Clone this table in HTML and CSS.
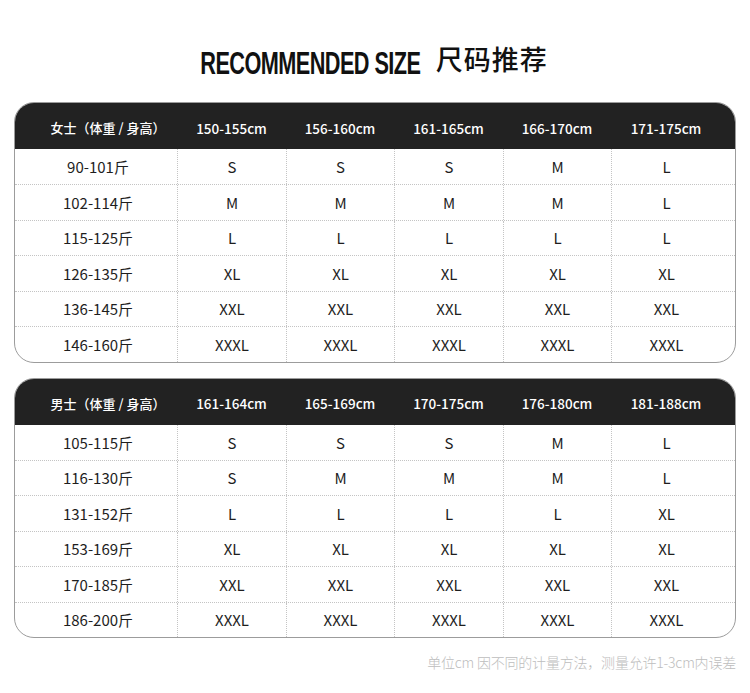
FILE: index.html
```html
<!DOCTYPE html>
<html lang="zh">
<head>
<meta charset="utf-8">
<title>尺码推荐</title>
<link rel="stylesheet" href="styles.css">
</head>
<body>
<div class="page">
  <h1 class="title"><span class="en">RECOMMENDED SIZE</span><span class="cn">尺码推荐</span></h1>

  <div class="chart">
    <div class="row head">
      <div class="c">女士（体重 / 身高）</div>
      <div class="c">150-155cm</div>
      <div class="c">156-160cm</div>
      <div class="c">161-165cm</div>
      <div class="c">166-170cm</div>
      <div class="c">171-175cm</div>
    </div>
    <div class="row"><div class="c">90-101斤</div><div class="c">S</div><div class="c">S</div><div class="c">S</div><div class="c">M</div><div class="c">L</div></div>
    <div class="row"><div class="c">102-114斤</div><div class="c">M</div><div class="c">M</div><div class="c">M</div><div class="c">M</div><div class="c">L</div></div>
    <div class="row"><div class="c">115-125斤</div><div class="c">L</div><div class="c">L</div><div class="c">L</div><div class="c">L</div><div class="c">L</div></div>
    <div class="row"><div class="c">126-135斤</div><div class="c">XL</div><div class="c">XL</div><div class="c">XL</div><div class="c">XL</div><div class="c">XL</div></div>
    <div class="row"><div class="c">136-145斤</div><div class="c">XXL</div><div class="c">XXL</div><div class="c">XXL</div><div class="c">XXL</div><div class="c">XXL</div></div>
    <div class="row"><div class="c">146-160斤</div><div class="c">XXXL</div><div class="c">XXXL</div><div class="c">XXXL</div><div class="c">XXXL</div><div class="c">XXXL</div></div>
  </div>

  <div class="chart second">
    <div class="row head">
      <div class="c">男士（体重 / 身高）</div>
      <div class="c">161-164cm</div>
      <div class="c">165-169cm</div>
      <div class="c">170-175cm</div>
      <div class="c">176-180cm</div>
      <div class="c">181-188cm</div>
    </div>
    <div class="row"><div class="c">105-115斤</div><div class="c">S</div><div class="c">S</div><div class="c">S</div><div class="c">M</div><div class="c">L</div></div>
    <div class="row"><div class="c">116-130斤</div><div class="c">S</div><div class="c">M</div><div class="c">M</div><div class="c">M</div><div class="c">L</div></div>
    <div class="row"><div class="c">131-152斤</div><div class="c">L</div><div class="c">L</div><div class="c">L</div><div class="c">L</div><div class="c">XL</div></div>
    <div class="row"><div class="c">153-169斤</div><div class="c">XL</div><div class="c">XL</div><div class="c">XL</div><div class="c">XL</div><div class="c">XL</div></div>
    <div class="row"><div class="c">170-185斤</div><div class="c">XXL</div><div class="c">XXL</div><div class="c">XXL</div><div class="c">XXL</div><div class="c">XXL</div></div>
    <div class="row"><div class="c">186-200斤</div><div class="c">XXXL</div><div class="c">XXXL</div><div class="c">XXXL</div><div class="c">XXXL</div><div class="c">XXXL</div></div>
  </div>

  <p class="note">单位cm 因不同的计量方法，测量允许1-3cm内误差</p>
</div>
</body>
</html>
```

FILE: styles.css
```css
html, body {
  margin: 0;
  padding: 0;
  background: #ffffff;
}

.page {
  width: 750px;
  height: 693px;
  font-family: "Noto Sans CJK SC", "Noto Sans", sans-serif;
  color: #1e1e1e;
  overflow: hidden;
}

.title {
  margin: 0;
  padding-top: 47px;
  height: 102px;
  box-sizing: border-box;
  display: flex;
  justify-content: center;
  align-items: flex-start;
  font-weight: normal;
  line-height: 1;
}

.title .en {
  display: inline-block;
  font-family: "Liberation Sans", "Noto Sans", sans-serif;
  font-weight: bold;
  font-size: 31px;
  letter-spacing: -0.8px;
  color: #111;
  transform: scaleX(0.70);
  transform-origin: right center;
  margin-left: -96px;
  margin-top: 1px;
}

.title .cn {
  font-family: "Noto Sans CJK SC", sans-serif;
  font-size: 27px;
  font-weight: 500;
  color: #111;
  margin-left: 15px;
  letter-spacing: 1px;
  margin-top: -2px;
}

.chart {
  margin-left: 14px;
  width: 720px;
  border: 1px solid #9c9c9c;
  border-radius: 20px;
  overflow: hidden;
}

.chart.second {
  margin-top: 15px;
}

.row {
  display: grid;
  grid-template-columns: 162px 109px 108px 109px 108px 124px;
  height: 35.5px;
  border-top: 1px dotted #c4c4c4;
  box-sizing: border-box;
}

.row .c {
  display: flex;
  align-items: center;
  justify-content: center;
  font-size: 15px;
  border-left: 1px dotted #c4c4c4;
}

.row .c:first-child {
  border-left: none;
  padding-left: 4px;
}

.row .c:last-child {
  padding-right: 14px;
}

.row.head {
  height: 46px;
  border-top: none;
  background: #222222;
  color: #ffffff;
}

.row.head .c {
  border-left: none;
  font-size: 13.5px;
  font-weight: 500;
  padding-top: 3px;
}

.row.head .c:first-child {
  padding-left: 24px;
  font-size: 13px;
}

.row.head + .row {
  border-top: none;
  height: 35px;
}

.note {
  margin: 14px 14px 0 0;
  text-align: right;
  font-size: 14px;
  font-weight: 300;
  color: #bdbdbd;
  letter-spacing: -0.2px;
}
```
